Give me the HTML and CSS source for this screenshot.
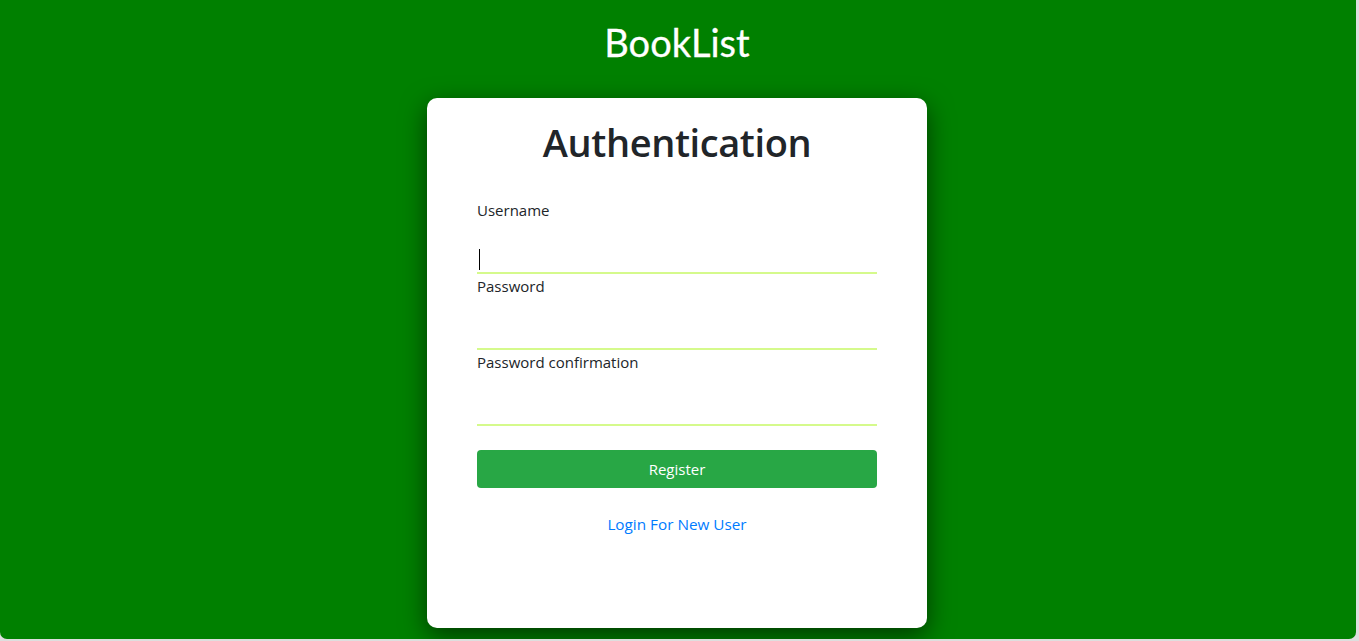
FILE: index.html
```html
<!DOCTYPE html>
<html lang="en">
<head>
<meta charset="utf-8">
<title>BookList</title>
<link rel="stylesheet" href="styles.css">
</head>
<body>
<div class="page">
  <h1 class="brand">BookList</h1>
  <div class="card">
    <h2 class="card-title">Authentication</h2>
    <form class="form">
      <div class="field">
        <label class="label" for="u">Username</label>
        <div class="input-wrap">
          <input class="input" id="u" type="text">
          <span class="caret"></span>
        </div>
      </div>
      <div class="field">
        <label class="label" for="p">Password</label>
        <div class="input-wrap"><input class="input" id="p" type="password"></div>
      </div>
      <div class="field">
        <label class="label" for="pc">Password confirmation</label>
        <div class="input-wrap"><input class="input" id="pc" type="password"></div>
      </div>
      <button class="btn" type="button">Register</button>
      <div class="link-row"><a class="link" href="#">Login For New User</a></div>
    </form>
  </div>
</div>
</body>
</html>
```
FILE: styles.css
```css
* { box-sizing: border-box; }
html, body { margin: 0; padding: 0; }
body {
  background: #dedede;
  width: 1359px;
  height: 641px;
  overflow: hidden;
  font-family: "Open Sans", "Noto Sans", sans-serif;
  color: #212529;
}
.page {
  width: 1356px;
  height: 639px;
  background: #008000;
  border-radius: 0 0 7px 7px;
  display: flex;
  flex-direction: column;
  align-items: center;
  padding: 20px 2px 0 0;
  overflow: hidden;
}
.brand {
  margin: 0;
  font-family: "Lato", sans-serif;
  font-weight: 400;
  font-size: 38px;
  line-height: 44px;
  color: #ffffff;
  -webkit-text-stroke: 0.3px #ffffff;
}
.card {
  margin-top: 34px;
  width: 500px;
  height: 530px;
  flex: none;
  background: #ffffff;
  border-radius: 10px;
  padding: 20px 50px 0;
  box-shadow: 0 8px 26px rgba(0, 0, 0, 0.55);
}
.card-title {
  margin: 0;
  text-align: center;
  font-size: 38px;
  font-weight: 600;
  line-height: 48px;
  color: #212529;
  letter-spacing: -0.4px;
}
.form {
  margin-top: 32px;
  display: flex;
  flex-direction: column;
}
.field {
  display: flex;
  flex-direction: column;
}
.label {
  font-size: 15px;
  line-height: 24px;
  height: 24px;
  color: #212529;
}
.input-wrap { position: relative; }
.input {
  display: block;
  width: 100%;
  height: 52px;
  border: none;
  border-bottom: 2px solid #d5fa8c;
  background: transparent;
  outline: none;
  padding: 0 2px;
  font-size: 16px;
  font-family: inherit;
}
.caret {
  position: absolute;
  left: 2px;
  top: 27px;
  width: 1px;
  height: 21px;
  background: #000000;
}
.btn {
  margin-top: 24px;
  height: 38px;
  width: 100%;
  border: none;
  border-radius: 4px;
  background: #28a745;
  color: #ffffff;
  font-family: inherit;
  font-size: 15px;
  cursor: pointer;
}
.link-row {
  margin-top: 24px;
  text-align: center;
  line-height: 24px;
}
.link {
  color: #007bff;
  text-decoration: none;
  font-size: 15.3px;
}
```
